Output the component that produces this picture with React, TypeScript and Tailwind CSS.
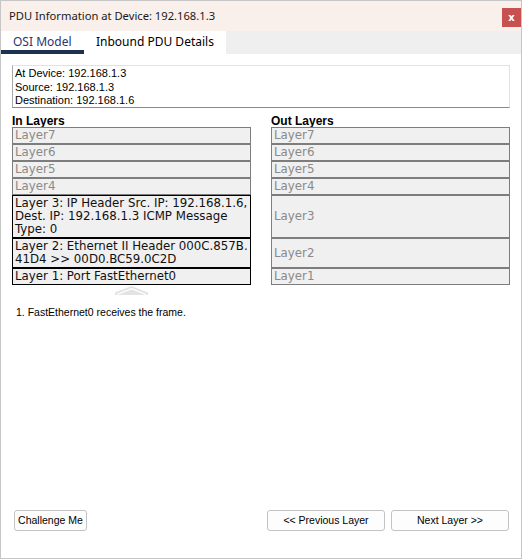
import React from "react";

const ui = { fontFamily: '"Liberation Sans", Arial, sans-serif' };
const seg = { fontFamily: '"Noto Sans", "Open Sans", sans-serif' };
const mono = { fontFamily: '"DejaVu Sans", Verdana, sans-serif' };

const inRows = ["Layer7", "Layer6", "Layer5", "Layer4"];

const GrayRow = ({ label, h }: { label: string; h: string }) => (
  <div
    className={`${h} box-border flex items-center border border-[#7d7d7d] bg-[#f0f0f0] pl-[2px] text-[11.8px] leading-[13px] text-[#8a8a8a]`}
    style={mono}
  >
    {label}
  </div>
);

const ActiveRow = ({ lines }: { lines: string[] }) => (
  <div
    className="box-border border border-black bg-[#f0f0f0] py-[1px] pl-[2px] text-[11.8px] leading-[13px] text-[#111] whitespace-nowrap overflow-hidden"
    style={mono}
  >
    {lines.map((l) => (
      <div key={l}>{l}</div>
    ))}
  </div>
);

const Btn = ({ label, w }: { label: string; w: string }) => (
  <button
    className={`${w} h-[21px] box-border rounded-[3px] border border-[#c3c3c3] bg-[#fdfdfd] text-[10.5px] text-black`}
    style={ui}
  >
    {label}
  </button>
);

export default function App() {
  return (
    <div className="w-[522px] h-[559px] box-border border border-[#c6c6c6] bg-white flex flex-col">
      {/* title bar */}
      <div className="h-[30px] bg-[#f9efeb] flex items-start justify-between">
        <span className="pl-[8px] pt-[7px] text-[11.2px] leading-[16px] text-[#1a1a1a]" style={seg}>
          PDU Information at Device: 192.168.1.3
        </span>
        <div
          className="mt-[7px] w-[19px] h-[19px] bg-[#c75050] flex items-center justify-center text-white text-[10px] font-bold leading-none"
          style={mono}
        >
          x
        </div>
      </div>

      {/* tabs */}
      <div className="h-[23px] bg-[#efefef] flex" style={seg}>
        <div className="w-[83px] bg-white flex flex-col">
          <span className="flex-1 pl-[12px] pt-[3px] text-[12px] leading-[16px] text-[#2e3470]">OSI Model</span>
          <div className="h-[4px] bg-[#1d3150]" />
        </div>
        <div className="w-[142px] bg-white pl-[12px] pt-[3px] text-[12px] leading-[16px] text-black">
          Inbound PDU Details
        </div>
      </div>

      {/* content */}
      <div className="px-[11px] pt-[11px]">
        <div
          className="h-[43px] box-border border border-[#e2e2e2] border-l-[#a8a8a8] border-b-[#8a8a8a] pl-[2px] pt-[1px] text-[11px] leading-[13.5px] text-black"
          style={ui}
        >
          <div>At Device: 192.168.1.3</div>
          <div>Source: 192.168.1.3</div>
          <div>Destination: 192.168.1.6</div>
        </div>

        <div className="flex gap-[20px]">
          <div className="w-[239px] flex flex-col">
            <div className="h-[19px] flex items-end text-[12px] leading-[12px] font-bold text-black" style={ui}>
              In Layers
            </div>
            {inRows.map((r) => (
              <GrayRow key={r} label={r} h="h-[17px]" />
            ))}
            <ActiveRow
              lines={[
                "Layer 3: IP Header Src. IP: 192.168.1.6,",
                "Dest. IP: 192.168.1.3 ICMP Message",
                "Type: 0",
              ]}
            />
            <ActiveRow lines={["Layer 2: Ethernet II Header 000C.857B.", "41D4 >> 00D0.BC59.0C2D"]} />
            <ActiveRow lines={["Layer 1: Port FastEthernet0"]} />
            <div className="flex justify-center pt-[1px]">
              <svg width="33" height="9" viewBox="0 0 33 9">
                <polygon points="0,9 0,6.5 16.5,0 33,6.5 33,9" fill="#e3e3e3" />
                <polyline points="2,8.5 16.5,2.6 31,8.5" fill="none" stroke="#ffffff" strokeWidth="1.3" />
              </svg>
            </div>
          </div>

          <div className="w-[239px] flex flex-col">
            <div className="h-[19px] flex items-end text-[12px] leading-[12px] font-bold text-black" style={ui}>
              Out Layers
            </div>
            {inRows.map((r) => (
              <GrayRow key={r} label={r} h="h-[17px]" />
            ))}
            <GrayRow label="Layer3" h="h-[43px]" />
            <GrayRow label="Layer2" h="h-[30px]" />
            <GrayRow label="Layer1" h="h-[17px]" />
          </div>
        </div>

        <p className="mt-[10px] pl-[4px] text-[10.5px] leading-[14px] text-black" style={ui}>
          1. FastEthernet0 receives the frame.
        </p>
      </div>

      {/* buttons */}
      <div className="mt-auto pb-[27px] pl-[13px] pr-[12px] flex items-center">
        <Btn label="Challenge Me" w="w-[73px]" />
        <div className="flex-1" />
        <div className="flex gap-[6px]">
          <Btn label="<< Previous Layer" w="w-[118px]" />
          <Btn label="Next Layer >>" w="w-[118px]" />
        </div>
      </div>
    </div>
  );
}
